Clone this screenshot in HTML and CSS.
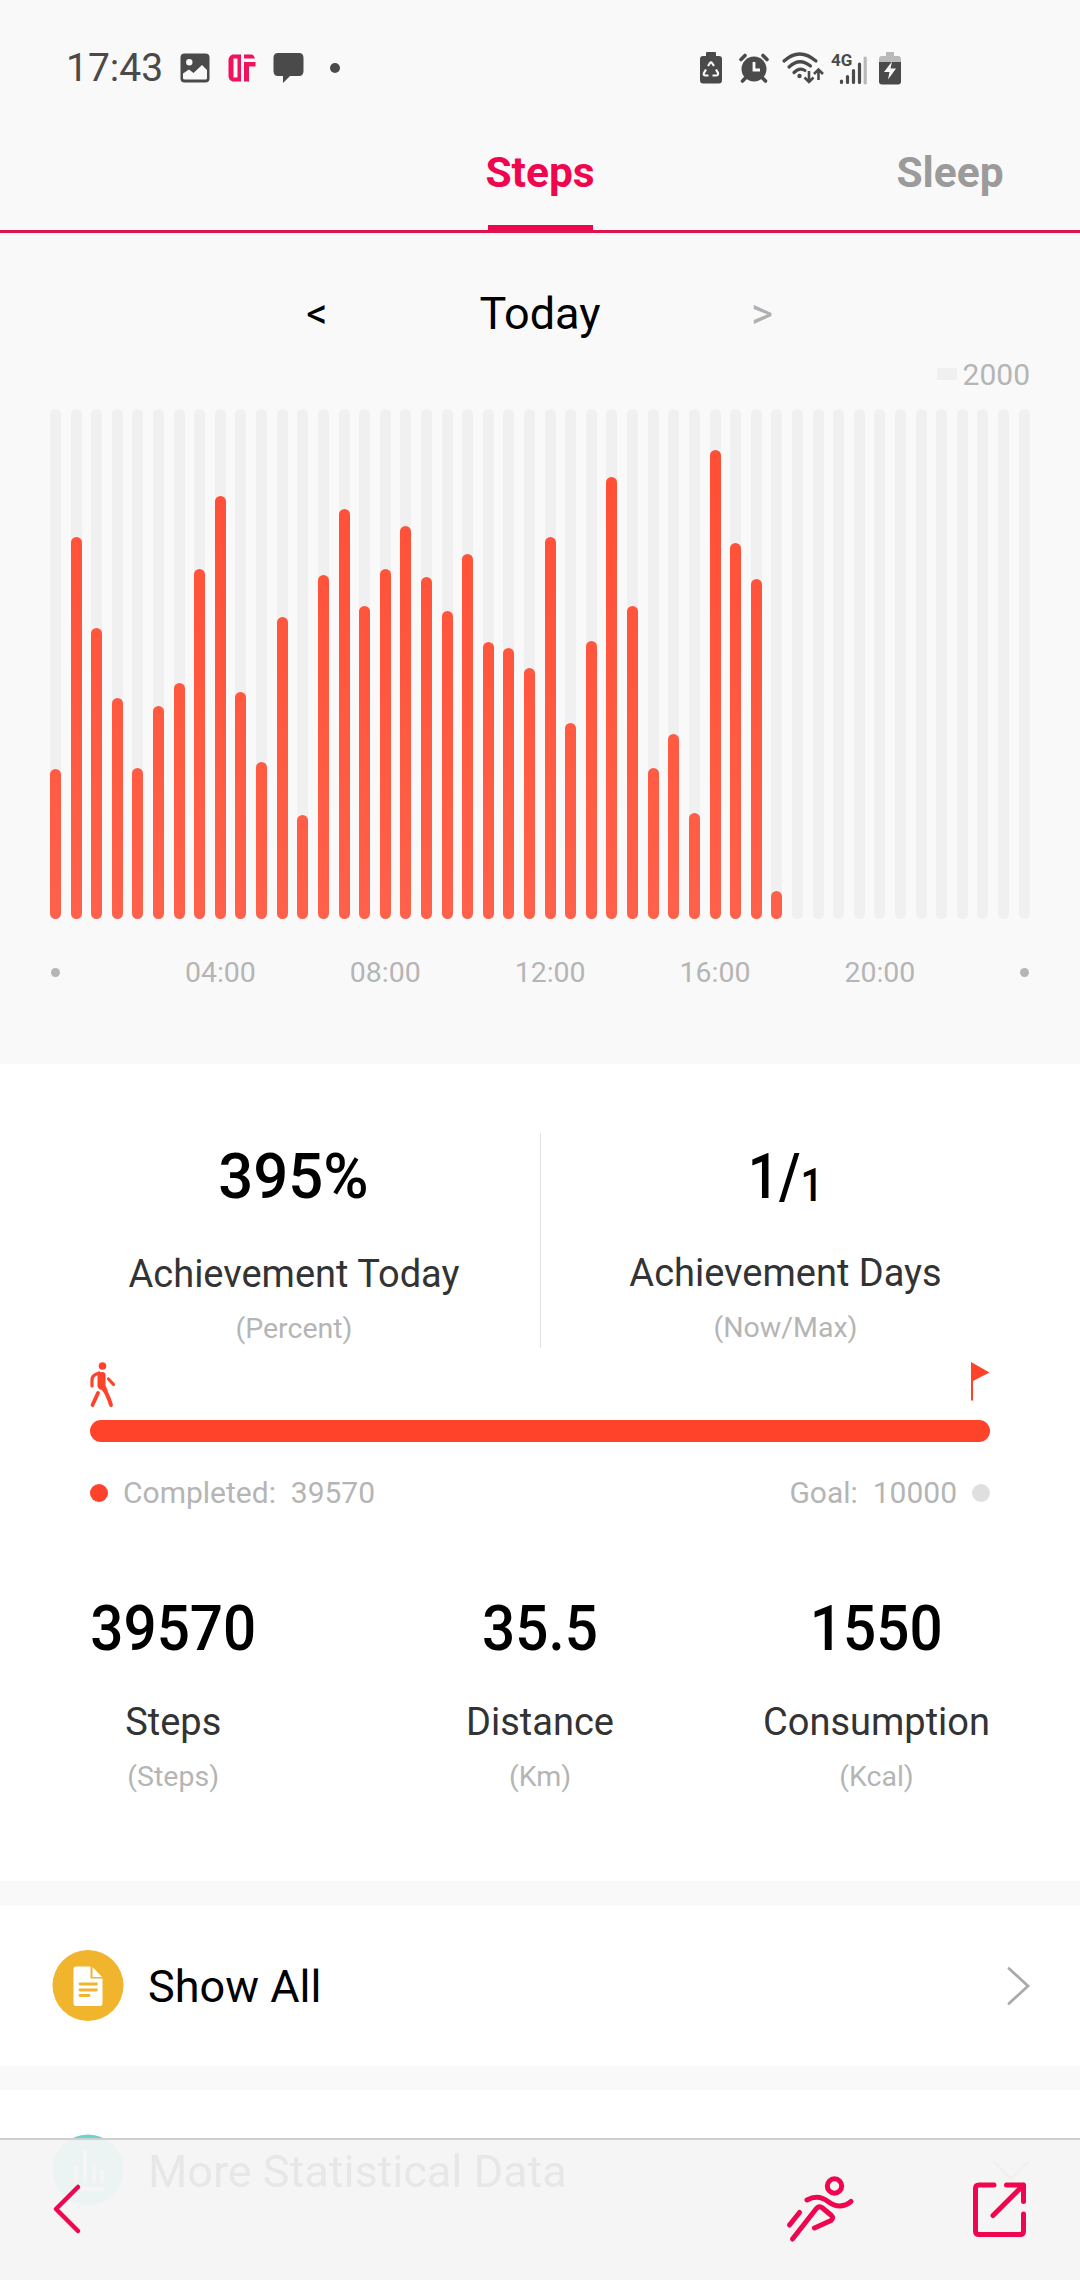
FILE: index.html
```html
<!DOCTYPE html>
<html lang="en">
<head>
    <meta charset="UTF-8">
    <meta name="viewport" content="width=device-width, initial-scale=1.0">
    <title>Steps</title>
    <link rel="stylesheet" href="styles.css">
</head>
<body>

<div class="status-bar">
    <span class="clock">17:43</span>
    <div class="status-left">
        <svg width="30" height="30" viewBox="0 0 30 30">
            <rect x="0.5" y="0.5" width="29" height="29" rx="4" fill="#4a4a4a"/>
            <circle cx="9.3" cy="9.3" r="3.2" fill="#f9f9f9"/>
            <path d="M3 20.5L9 16.5L13.5 20L22 12L27 17V25Q27 26.5 25.500 26.500H4.500Q3 26.500 3 25Z" fill="#f9f9f9"/>
        </svg>
        <svg class="icon-app" width="28" height="28" viewBox="0 0 28 28">
            <path d="M4.500 0.500H13V27.500H4.500Q0.500 26 0.500 22V6Q0.500 2 4.500 0.500ZM5.500 4.500V23.500H9.500V4.500Z" fill="#f0135c" fill-rule="evenodd"/>
            <path d="M16 0.500H24Q26 1 27 4.500H16ZM16 8H27.500V12.500H21V27.500H16Z" fill="#f0135c"/>
        </svg>
        <svg class="icon-chat" width="31" height="31" viewBox="0 0 31 31">
            <path d="M5 0H26Q30.500 0 30.500 5V18Q30.500 23 26 23H17L10 30V23H5Q0.500 23 0.500 18V5Q0.500 0 5 0Z" fill="#4a4a4a"/>
        </svg>
        <span class="more-dot"></span>
    </div>
    <div class="status-right">
        <svg width="22" height="32" viewBox="0 0 22 32">
            <path d="M7 0H15Q16 0 16 1V4H19Q22 4 22 7V28Q22 31.500 19 31.500H3Q0 31.500 0 28V7Q0 4 3 4H6V1Q6 0 7 0Z" fill="#4a4a4a"/>
            <path d="M8 14L10 11Q11 9.500 12 11L14 14M16 17.500L18 21Q18.500 23.500 16 23.500H12.500M8.500 23.500H5.500Q3 23.500 4 21L6 17.500" fill="none" stroke="#f9f9f9" stroke-width="2.200"/>
        </svg>
        <svg class="icon-alarm" width="30" height="30" viewBox="0 0 30 30">
            <circle cx="15" cy="16" r="12.500" fill="#4a4a4a"/>
            <path d="M2 6.500L6 2.500M28 6.500L24 2.500M3.500 28L8 23.500M26.500 28L22 23.500" stroke="#4a4a4a" stroke-width="3.600" stroke-linecap="round"/>
            <path d="M15 9V17H21" fill="none" stroke="#f9f9f9" stroke-width="2.800"/>
        </svg>
        <svg class="icon-wifi" width="42" height="32" viewBox="0 0 42 32">
            <path d="M2 9Q17.500 -5 34 9M7 15Q17.500 5 28.500 14M12 20.500Q17.500 15 23 18.500" fill="none" stroke="#4a4a4a" stroke-width="3.200" stroke-linecap="round"/>
            <circle cx="17.500" cy="24" r="2.200" fill="#4a4a4a"/>
            <path d="M27 19V30M22.500 25.500L27 30L31.500 25.500M36.500 28V18M32 22L36.500 17.500L41 22" fill="none" stroke="#4a4a4a" stroke-width="2.600"/>
        </svg>
        <svg class="icon-signal" width="36" height="33" viewBox="0 0 36 33">
            <text x="0" y="14" class="network">4G</text>
            <path d="M10.500 29V30.500M16.500 24.500V30.500M22.500 18.500V30.500M28.500 12V30.500" stroke="#4a4a4a" stroke-width="3.200" stroke-linecap="round"/>
            <path d="M34.200 6V31" stroke="#b9b9b9" stroke-width="3.200" stroke-linecap="round"/>
        </svg>
        <svg class="icon-battery" width="22" height="33" viewBox="0 0 22 33">
            <path d="M7 0H15V4H19Q22 4 22 7V10H0V7Q0 4 3 4H7Z" fill="#b9b9b9"/>
            <path d="M0 10H22V29.500Q22 32.500 19 32.500H3Q0 32.500 0 29.500Z" fill="#4a4a4a"/>
            <path d="M13 9.500L5 20H10.500L9 27.500L17 16.500H11.500Z" fill="#f9f9f9"/>
        </svg>
    </div>
</div>

<div class="tabs">
    <span></span>
    <span class="tab active">Steps</span>
    <span class="tab">Sleep</span>
</div>

<div class="chart-section">
    <div class="date-nav">
        <span>&lt;</span>
        <span class="date">Today</span>
        <span class="disabled">&gt;</span>
    </div>
    <div class="scale"><i></i>2000</div>
    <div class="chart" id="chart"></div>
    <div class="axis">
        <i class="axis-start"></i>
        <span class="h4">04:00</span>
        <span class="h8">08:00</span>
        <span class="h12">12:00</span>
        <span class="h16">16:00</span>
        <span class="h20">20:00</span>
        <i class="axis-end"></i>
    </div>
</div>

<div class="summary">
    <div class="achievement">
        <div class="achievement-item today">
            <div class="value percent"><b>395%</b></div>
            <div class="label">Achievement Today</div>
            <div class="unit">(Percent)</div>
        </div>
        <div class="achievement-item days">
            <div class="value"><b>1/<small>1</small></b></div>
            <div class="label">Achievement Days</div>
            <div class="unit">(Now/Max)</div>
        </div>
    </div>

    <div class="progress-icons">
        <svg width="26" height="46" viewBox="0 0 26 46" fill="none" stroke="#ff432b" stroke-linecap="round" stroke-linejoin="round">
            <circle cx="12.500" cy="4" r="3.800" fill="#ff432b" stroke="none"/>
            <path d="M2 24V18Q2 14 5.500 12.500L9 11" stroke-width="3.200"/>
            <path d="M7.500 11Q15.500 8 15.500 13V23.500L18 29L10 27.500Q7 26 7.500 22Z" fill="#ff432b" stroke="none"/>
            <path d="M13 26.500Q17 30 21 43" stroke-width="4"/>
            <path d="M8 31L2.500 43" stroke-width="3.800"/>
            <path d="M18.500 17L23.500 22.500" stroke-width="3.200"/>
        </svg>
        <svg width="20" height="46" viewBox="0 0 20 46">
            <path d="M1 0L19.500 10.500L3 19V38.500H1Z" fill="#ff432b"/>
        </svg>
    </div>
    <div class="progress"></div>
    <div class="legend">
        <span><i class="dot done"></i>Completed:&nbsp; 39570</span>
        <span>Goal:&nbsp; 10000<i class="dot goal"></i></span>
    </div>

    <div class="stats">
        <div class="stat">
            <div class="value"><b>39570</b></div>
            <div class="label">Steps</div>
            <div class="unit">(Steps)</div>
        </div>
        <div class="stat">
            <div class="value"><b>35.5</b></div>
            <div class="label">Distance</div>
            <div class="unit">(Km)</div>
        </div>
        <div class="stat">
            <div class="value"><b>1550</b></div>
            <div class="label">Consumption</div>
            <div class="unit">(Kcal)</div>
        </div>
    </div>
</div>

<div class="row">
    <svg width="72" height="72" viewBox="0 0 72 72">
        <circle cx="36" cy="35.500" r="35.500" fill="#f0b42d"/>
        <path d="M24 16.500H38.500V28.500H50.500V53Q50.500 56 48 56H24Q21.500 56 21.500 53V19.500Q21.500 16.500 24 16.500Z" fill="#fff"/>
        <path d="M40.500 17L50 27H40.500Z" fill="#fff"/>
        <path d="M28 34H44.500M28 40H44.500M28 45.500H37" stroke="#f0b42d" stroke-width="2.800" stroke-linecap="round"/>
    </svg>
    <span>Show All</span>
    <svg class="arrow" width="24" height="40" viewBox="0 0 24 40">
        <path d="M3 2.500L22 20L3 37.500" fill="none" stroke="#aaa" stroke-width="2.800" stroke-linecap="round"/>
    </svg>
</div>

<div class="row">
    <svg width="72" height="72" viewBox="0 0 72 72">
        <circle cx="36" cy="35" r="35.500" fill="#62d6cf"/>
        <path d="M21 54H52M24 48V31M33 48V15M42 48V30M50 48V35" stroke="#fff" stroke-width="4"/>
    </svg>
    <span>More Statistical Data</span>
    <svg class="arrow" width="38" height="22" viewBox="0 0 38 22">
        <path d="M2 2L19 19L36 2" fill="none" stroke="#aaa" stroke-width="2.800" stroke-linecap="round"/>
    </svg>
</div>

<div class="toolbar">
    <svg width="30" height="50" viewBox="0 0 30 50">
        <path d="M27 3L5 25L27 47" fill="none" stroke="#f0064f" stroke-width="4.500" stroke-linecap="round" stroke-linejoin="round"/>
    </svg>
    <svg class="icon-run" width="68" height="68" viewBox="0 0 68 68" fill="none" stroke="#f0064f" stroke-width="5" stroke-linecap="round" stroke-linejoin="round">
        <circle cx="48.500" cy="11" r="7.200"/>
        <path d="M21 25Q32 19 42 26.500Q54 35.500 65 26.500"/>
        <path d="M6.500 64L30 34Q33 30 36.500 33L45.500 40.500Q48 43 45 45.500L28.500 53"/>
        <path d="M3.500 50L13.500 37.500"/>
    </svg>
    <svg class="icon-share" width="56" height="56" viewBox="0 0 56 56" fill="none" stroke="#f0064f" stroke-width="5" stroke-linecap="round" stroke-linejoin="round">
        <path d="M22 4H7Q3.500 4 3.500 7.500V50Q3.500 53.500 7 53.500H48Q51.500 53.500 51.500 50V33"/>
        <path d="M34.500 4H51.500V20.500M51.500 4L21 34.500"/>
    </svg>
</div>

<script>
    // bar heights in px, one per half hour
    const steps = [150, 382, 291, 221, 151, 213, 236, 350, 423, 227, 157, 302, 104, 344, 410, 313,
        350, 393, 342, 308, 365, 277, 271, 251, 382, 196, 278, 442, 313, 151, 185, 106,
        469, 376, 340, 28];
    const chart = document.getElementById('chart');

    for (let i = 0; i < 48; i++) {
        const slot = document.createElement('div');
        slot.className = 'slot';
        if (steps[i]) {
            const bar = document.createElement('div');
            bar.className = 'bar';
            bar.style.height = steps[i] + 'px';
            slot.appendChild(bar);
        }
        chart.appendChild(slot);
    }
</script>

</body>
</html>
```
FILE: styles.css
```css
* {
    box-sizing: border-box;
}

body {
    font-family: Roboto, sans-serif;
    margin: 0;
    height: 2280px;
    overflow: hidden;
    background-color: #f9f9f9;
    color: #000;
}

svg {
    display: block;
    flex: none;
    overflow: visible;
}

.status-bar {
    display: flex;
    align-items: center;
    height: 136px;
    padding: 0 179px 0 66px;
}

.clock {
    width: 114px;
    font-size: 39px;
    color: #4a4a4a;
}

.status-left,
.status-right {
    display: flex;
    align-items: center;
}

.status-right {
    margin-left: auto;
}

.icon-app {
    margin-left: 18px;
}

.icon-chat {
    margin-left: 17px;
}

.more-dot {
    width: 10px;
    height: 10px;
    margin-left: 26px;
    border-radius: 50%;
    background-color: #4a4a4a;
}

.icon-alarm {
    margin-left: 17px;
}

.icon-wifi {
    margin-left: 13px;
}

.icon-signal {
    margin-left: 7px;
}

.icon-battery {
    margin-left: 12px;
}

.network {
    font-size: 17px;
    font-weight: 700;
    fill: #4a4a4a;
}

.tabs {
    display: grid;
    grid-template-columns: 260px 1fr 260px;
    height: 97px;
    border-bottom: 3px solid #dc1450;
}

.tab {
    position: relative;
    line-height: 74px;
    text-align: center;
    font-size: 42.5px;
    font-weight: 700;
    color: #9b9b9b;
}

.tab.active {
    color: #f0064f;
}

.tab.active::after {
    content: '';
    position: absolute;
    left: 50%;
    bottom: 0;
    width: 105px;
    height: 5px;
    margin-left: -52px;
    background-color: #f0064f;
}

.chart-section {
    height: 831px;
    padding-top: 41px;
}

.date-nav {
    display: grid;
    grid-template-columns: 102px 344px 100px;
    margin-left: 266px;
    line-height: 80px;
    text-align: center;
    font-size: 42px;
}

.date {
    font-size: 45px;
}

.disabled {
    color: #b0b0b0;
}

.scale {
    display: flex;
    justify-content: flex-end;
    align-items: center;
    gap: 6px;
    height: 34px;
    margin-top: 3px;
    padding-right: 50px;
    font-size: 30px;
    color: #b5b5b5;
}

.scale i {
    width: 20px;
    height: 12px;
    background-color: #f0f0f0;
}

.chart {
    display: flex;
    justify-content: space-between;
    height: 510px;
    margin: 18px 50px 0;
}

.slot {
    display: flex;
    align-items: flex-end;
    width: 11px;
    border-radius: 6px;
    background-color: #f0f0f0;
}

.bar {
    width: 11px;
    border-radius: 6px;
    background: linear-gradient(to top, #ff614a, #ff4d33 510px);
}

/* same 48 columns as the bars, labels centred on their column */
.axis {
    display: grid;
    grid-template-columns: repeat(48, 11px);
    justify-content: space-between;
    justify-items: center;
    align-items: center;
    height: 40px;
    margin: 33px 50px 0;
    font-size: 28.5px;
    color: #b5b5b5;
}

.axis > * {
    grid-row: 1;
}

.axis i {
    width: 9px;
    height: 9px;
    border-radius: 50%;
    background-color: #b5b5b5;
}

.axis-start { grid-column: 1; }
.h4 { grid-column: 9; }
.h8 { grid-column: 17; }
.h12 { grid-column: 25; }
.h16 { grid-column: 33; }
.h20 { grid-column: 41; }
.axis-end { grid-column: 48; }

.summary {
    height: 817px;
    padding-top: 69px;
    background-color: #fff;
}

.achievement {
    display: grid;
    grid-template-columns: 493px 489px;
    height: 213px;
    margin-left: 48px;
    text-align: center;
}

.achievement-item.today {
    border-right: 1px solid #e2e2e2;
}

.achievement-item.today .label {
    padding-top: 1px;
}

.value {
    height: 86px;
    font-size: 63.5px;
    line-height: 88px;
}

.value b {
    display: inline-block;
    font-weight: 500;
    transform: scaleX(0.92);
}

.value.percent b {
    transform: scaleX(0.97);
}

.value small {
    position: relative;
    top: 3px;
    font-size: 46px;
}

.days .value b {
    transform: scaleX(0.87);
}

.label {
    margin-top: 31px;
    font-size: 38px;
    line-height: 46px;
    color: #333;
}

.unit {
    margin-top: 13px;
    font-size: 28.5px;
    line-height: 38px;
    color: #b5b5b5;
}

.progress-icons {
    display: flex;
    justify-content: space-between;
    margin: 16px 90px 0;
}

.progress {
    height: 22px;
    margin: 12px 90px 0;
    border-radius: 11px;
    background-color: #ff432b;
}

.legend {
    display: flex;
    justify-content: space-between;
    margin: 31px 90px 0;
    font-size: 30px;
    line-height: 40px;
    color: #b5b5b5;
}

.legend span {
    display: flex;
    align-items: center;
    gap: 15px;
}

.dot {
    width: 18px;
    height: 18px;
    border-radius: 50%;
}

.dot.done {
    background-color: #ff432b;
}

.dot.goal {
    background-color: #dfdfdf;
}

.stats {
    display: grid;
    grid-template-columns: 1fr auto 1fr;
    margin: 72px 90px 0 83px;
    text-align: center;
}

.stats .label {
    margin-top: 28px;
}

.stat:first-child {
    justify-self: start;
}

.stat:nth-child(2) {
    margin-left: 7px;
}

.stat:last-child {
    justify-self: end;
}

.row {
    display: flex;
    align-items: center;
    height: 161px;
    margin-top: 24px;
    padding: 0 50px 0 52px;
    font-size: 45px;
    background-color: #fff;
}

.row span {
    flex: 1;
    margin-left: 24px;
    padding-top: 2px;
}

.toolbar {
    position: fixed;
    left: 0;
    right: 0;
    bottom: 0;
    display: flex;
    align-items: center;
    height: 142px;
    padding: 0 52px 2px 51px;
    border-top: 2px solid #cfcfcf;
    background-color: rgba(244, 244, 244, 0.945);
}

.icon-run {
    margin-left: auto;
}

.icon-share {
    margin-left: 118px;
}
```
